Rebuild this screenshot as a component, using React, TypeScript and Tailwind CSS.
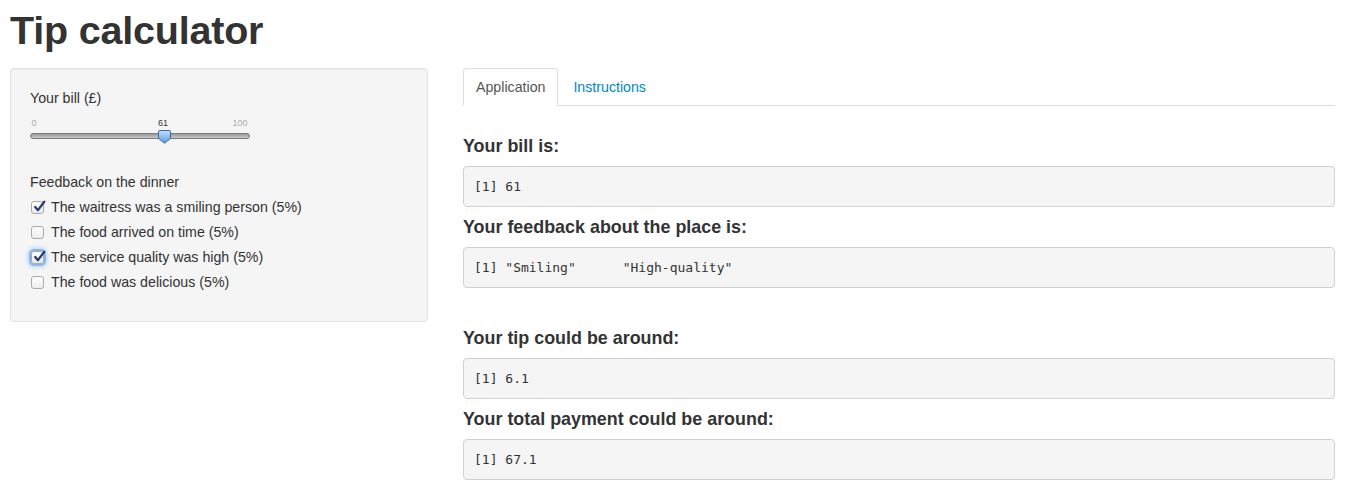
import { useState } from "react";

const options = [
  { id: "smile", label: "The waitress was a smiling person (5%)" },
  { id: "time", label: "The food arrived on time (5%)" },
  { id: "service", label: "The service quality was high (5%)" },
  { id: "delicious", label: "The food was delicious (5%)" },
];

const Check = ({ checked, focused }: { checked: boolean; focused?: boolean }) => (
  <span
    className={
      "relative flex h-[13px] w-[13px] shrink-0 items-center justify-center rounded-[3px] border border-[#a9a9a9] bg-gradient-to-b from-white to-[#ececec]" +
      (focused ? " shadow-[0_0_0_2px_#8ab8ee,0_0_4px_3px_#b4d3f7]" : "")
    }
  >
    {checked && (
      <svg viewBox="0 0 12 12" className="absolute -top-[2px] left-[1px] h-[13px] w-[13px]">
        <path d="M2 6.5 L4.6 9.4 L10.4 1.6" fill="none" stroke="#233e74" strokeWidth="2.1" strokeLinecap="round" strokeLinejoin="round" />
      </svg>
    )}
  </span>
);

const Output = ({ title, value, top = "mt-[10px]" }: { title: string; value: string; top?: string }) => (
  <>
    <h4 className={`${top} text-[17.9px] font-bold leading-[20px] text-[#333]`}>{title}</h4>
    <pre className="mt-[10px] h-[41px] rounded-[4px] border border-[#d0d0d0] bg-[#f5f5f5] px-[10px] font-['DejaVu_Sans_Mono',monospace] text-[13px] leading-[39px] whitespace-pre text-[#333]">
      {value}
    </pre>
  </>
);

export default function App() {
  const [bill] = useState(61);
  const [checked, setChecked] = useState<Record<string, boolean>>({ smile: true, service: true });
  const [tab, setTab] = useState("app");

  const tip = (bill * (Object.values(checked).filter(Boolean).length * 5)) / 100;
  const names: string[] = [];
  if (checked.smile) names.push('"Smiling"');
  if (checked.time) names.push('"On-time"');
  if (checked.service) names.push('"High-quality"');
  if (checked.delicious) names.push('"Delicious"');
  const width = Math.max(0, ...names.map((n) => n.length));
  const feedback = "[1] " + names.map((n, i) => (i < names.length - 1 ? n.padEnd(width) : n)).join(" ");

  return (
    <div className="min-h-[495px] bg-white pl-[10px] pr-[12px] font-['Liberation_Sans',Arial,sans-serif] text-[14.2px] text-[#333]">
      <h1 className="pt-[10px] text-[39.5px] font-bold leading-[40px] tracking-[-0.2px] text-[#333]">Tip calculator</h1>

      <div className="mt-[18px] flex gap-[35px]">
        <div className="h-[254px] w-[418px] shrink-0 rounded-[4px] border border-[#e3e3e3] bg-[#f5f5f5] p-[19px] shadow-[inset_0_1px_1px_rgba(0,0,0,0.05)]">
          <div className="leading-[20px]">Your bill (£)</div>

          <div className="relative h-[54px] w-[220px]">
            <span className="absolute left-[4px] top-[9px] -translate-x-1/2 text-[9px] text-[#aaa]">0</span>
            <span className="absolute left-[133px] top-[9px] -translate-x-1/2 text-[9px] text-[#333]">{bill}</span>
            <span className="absolute left-[210px] top-[9px] -translate-x-1/2 text-[9px] text-[#aaa]">100</span>
            <div className="absolute left-0 top-[25px] h-[6px] w-[220px] rounded-full border border-[#7c7c7c] bg-gradient-to-b from-[#9a9a9a] to-[#c9c9c9]" />
            <svg viewBox="0 0 13 14" className="absolute top-[22px] h-[14px] w-[13px]" style={{ left: `${(bill / 100) * 220 - 6.5}px` }}>
              <defs>
                <linearGradient id="hg" x1="0" y1="0" x2="0" y2="1">
                  <stop offset="0" stopColor="#c4def9" />
                  <stop offset="1" stopColor="#5b9ae2" />
                </linearGradient>
              </defs>
              <path d="M2 0.5 H11 Q12.5 0.5 12.5 2 V8.5 L6.5 13.2 L0.5 8.5 V2 Q0.5 0.5 2 0.5 Z" fill="url(#hg)" stroke="#3a66ad" strokeWidth="1" />
            </svg>
          </div>

          <div className="mt-[10px] leading-[20px]">Feedback on the dinner</div>
          <div className="mt-[3px] flex flex-col">
            {options.map((o) => (
              <label
                key={o.id}
                className="flex h-[25px] cursor-pointer items-center gap-[7px] pl-[1px]"
                onClick={() => setChecked((prev) => ({ ...prev, [o.id]: !prev[o.id] }))}
              >
                <Check checked={!!checked[o.id]} focused={o.id === "service"} />
                <span>{o.label}</span>
              </label>
            ))}
          </div>
        </div>

        <div className="min-w-0 flex-1">
          <div className="flex h-[38px] border-b border-[#ddd]">
            <button
              type="button"
              onClick={() => setTab("app")}
              className={
                "-mb-px mr-[2px] h-[38px] rounded-t-[4px] border px-[12px] leading-[36px] " +
                (tab === "app" ? "border-[#ddd] border-b-white bg-white text-[#555]" : "border-transparent text-[#0088cc]")
              }
            >
              Application
            </button>
            <button
              type="button"
              onClick={() => setTab("ins")}
              className={
                "-mb-px h-[38px] rounded-t-[4px] border px-[12px] leading-[36px] " +
                (tab === "ins" ? "border-[#ddd] border-b-white bg-white text-[#555]" : "border-transparent text-[#0088cc]")
              }
            >
              Instructions
            </button>
          </div>

          {tab === "app" ? (
            <div>
              <Output top="mt-[30px]" title="Your bill is:" value={`[1] ${bill}`} />
              <Output title="Your feedback about the place is:" value={feedback} />
              <Output top="mt-[40px]" title="Your tip could be around:" value={`[1] ${Number(tip.toFixed(2))}`} />
              <Output title="Your total payment could be around:" value={`[1] ${Number((bill + tip).toFixed(2))}`} />
            </div>
          ) : (
            <p className="mt-[30px] leading-[20px]">Move the slider to set your bill, then tick what you liked about the dinner.</p>
          )}
        </div>
      </div>
    </div>
  );
}
